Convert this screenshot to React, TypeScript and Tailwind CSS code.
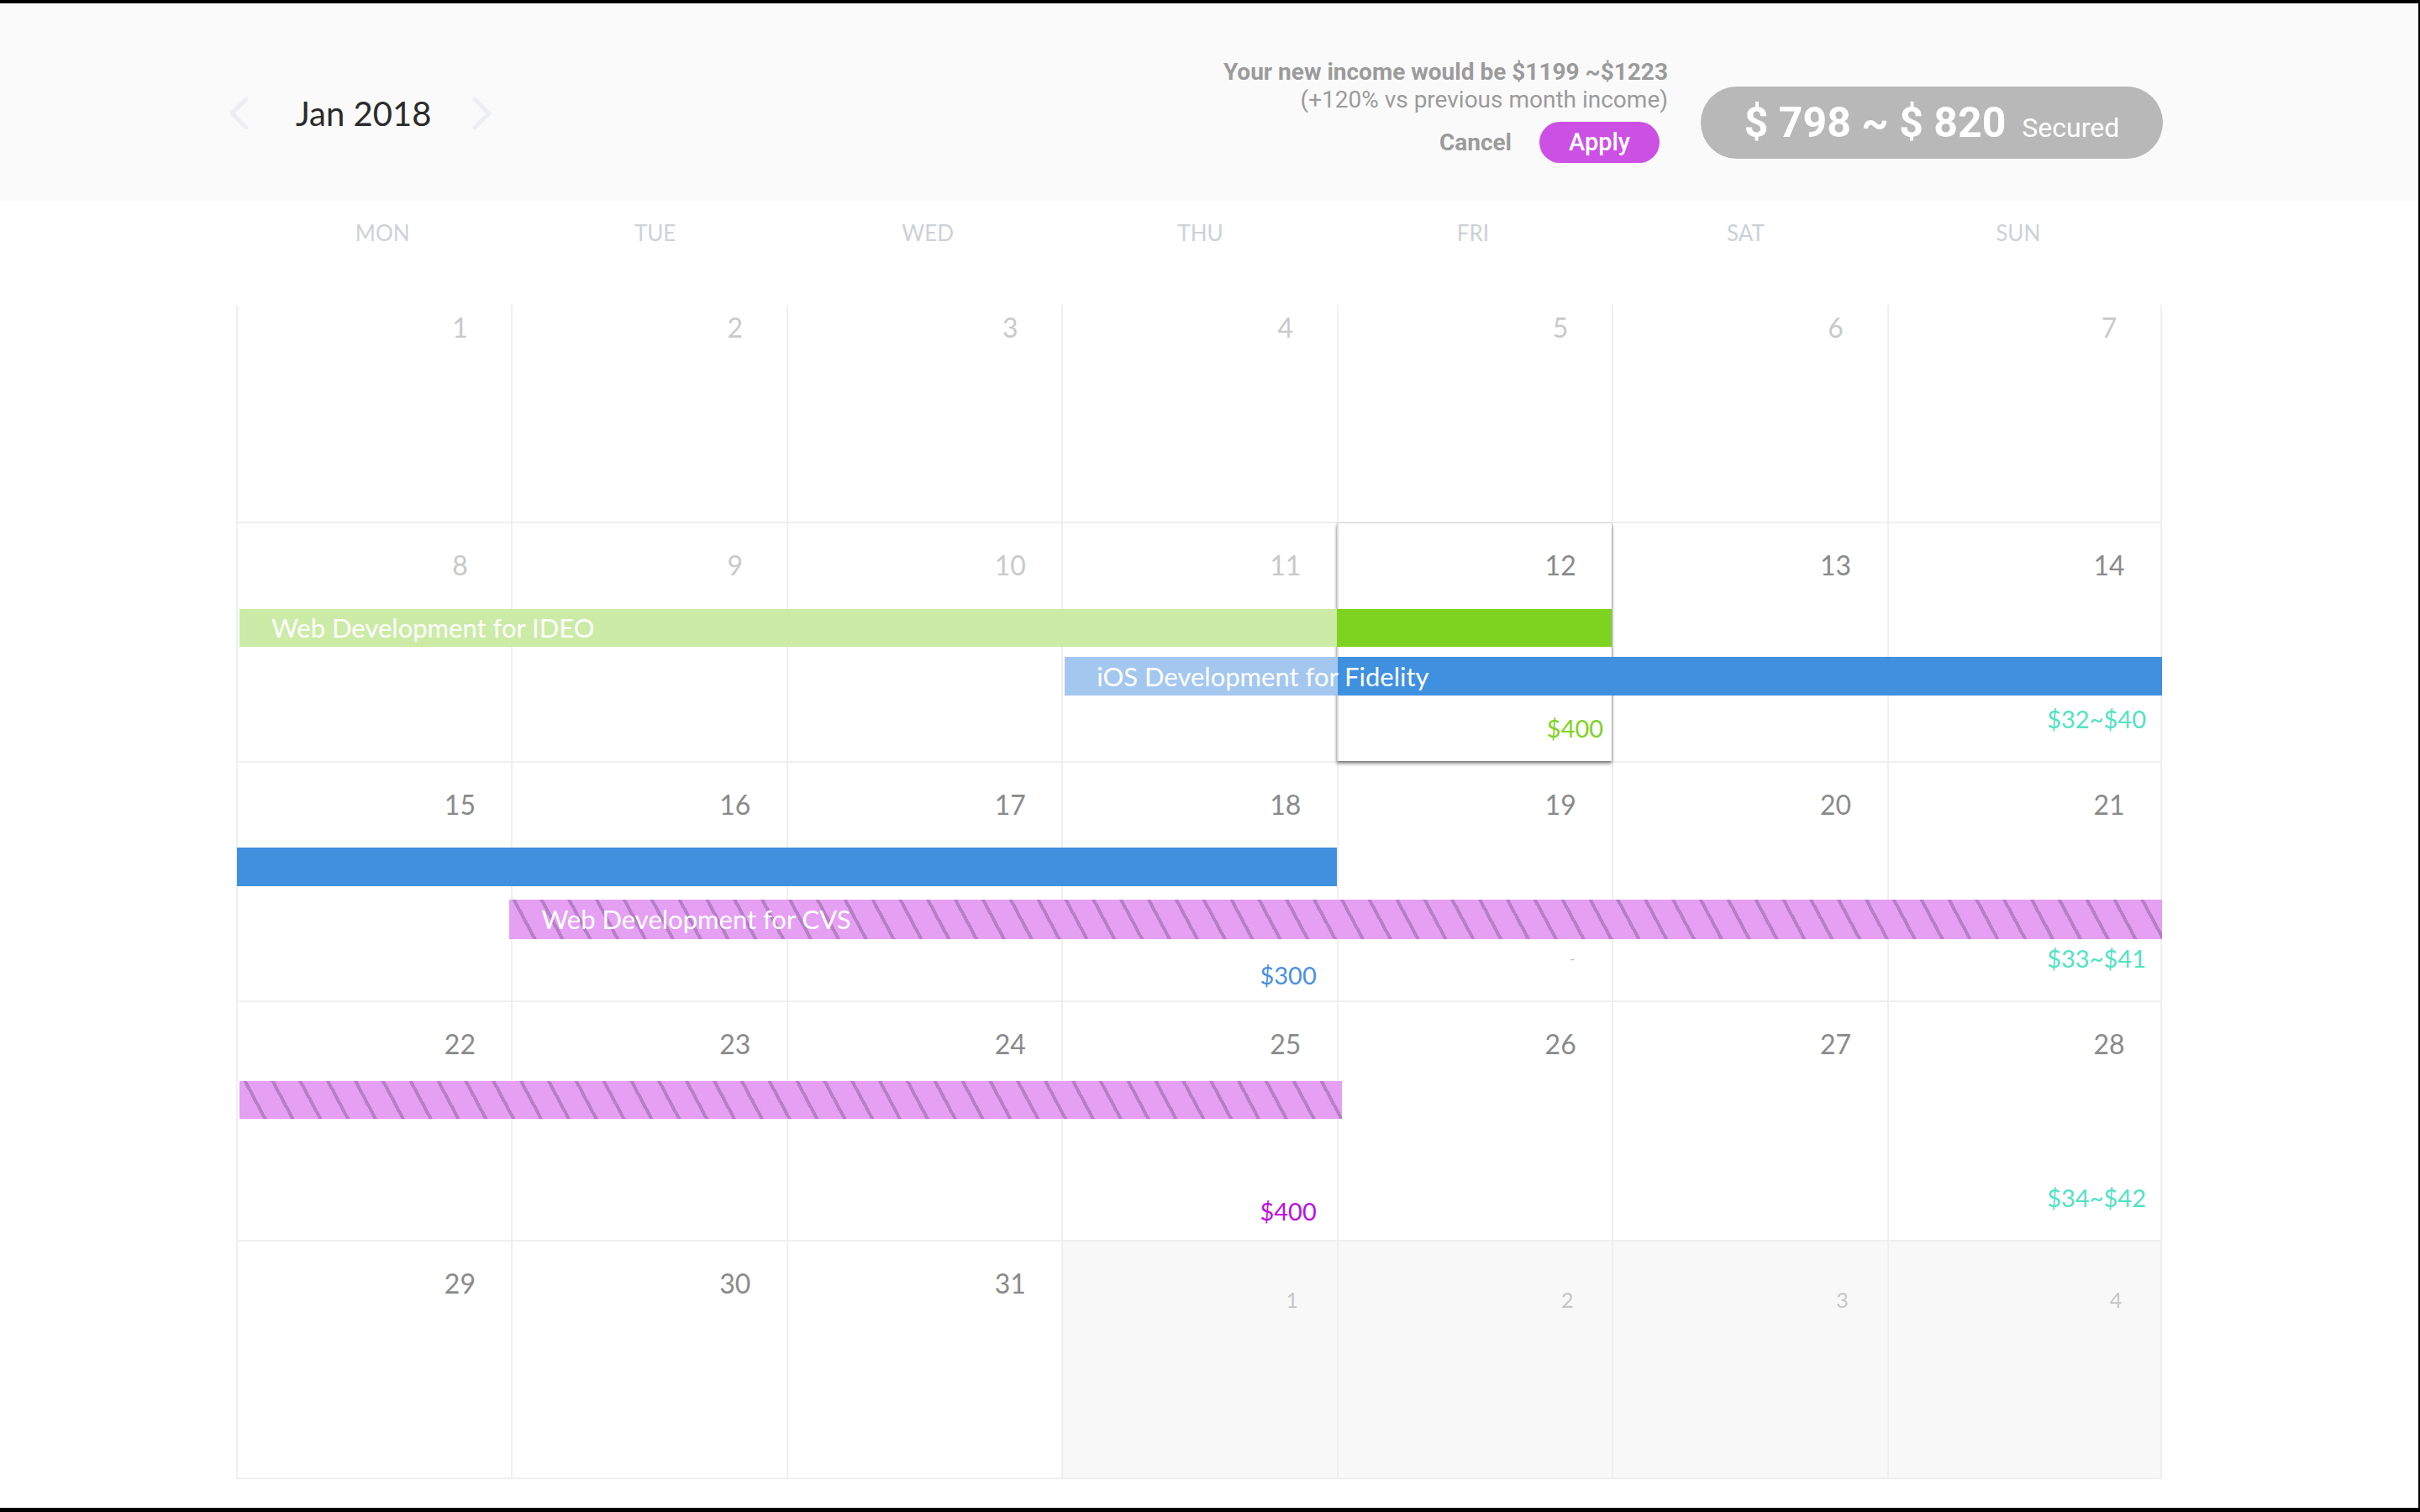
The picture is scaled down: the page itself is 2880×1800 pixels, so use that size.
import React from "react";

const days = ["MON", "TUE", "WED", "THU", "FRI", "SAT", "SUN"];

const colStart = [
  "col-start-1",
  "col-start-2",
  "col-start-3",
  "col-start-4",
  "col-start-5",
  "col-start-6",
  "col-start-7",
];

type Label = { text: string; className: string };

type Cell = {
  n: number;
  tone: "past" | "now" | "next";
  selected?: boolean;
  label?: Label;
};

type Bar = { className: string; text?: string };

type Week = { first?: boolean; cells: Cell[]; bars: Bar[] };

const stripes =
  "bg-[repeating-linear-gradient(62deg,#e59ff3_0px,#e59ff3_25px,#b67fc6_25px,#b67fc6_29px)]";

const weeks: Week[] = [
  {
    first: true,
    cells: [1, 2, 3, 4, 5, 6, 7].map((n) => ({ n, tone: "past" as const })),
    bars: [],
  },
  {
    cells: [
      { n: 8, tone: "past" },
      { n: 9, tone: "past" },
      { n: 10, tone: "past" },
      { n: 11, tone: "past" },
      {
        n: 12,
        tone: "now",
        selected: true,
        label: { text: "$400", className: "text-[29px] leading-[34px] text-[#7ed321] pb-[22px] pr-[10px]" },
      },
      { n: 13, tone: "now" },
      {
        n: 14,
        tone: "now",
        label: { text: "$32~$40", className: "text-[29px] leading-[34px] text-[#50e3c2] pb-[33px] pr-[17px]" },
      },
    ],
    bars: [
      {
        className:
          "col-start-1 col-end-6 mt-[102px] h-[45px] ml-[4px] bg-[linear-gradient(90deg,#cbeba6_0%,#cbeba6_80%,#7ed321_80%)]",
        text: "Web Development for IDEO",
      },
      {
        className:
          "col-start-4 col-end-8 mt-[159px] h-[46px] ml-[4px] bg-[linear-gradient(90deg,#a4c7f0_0%,#a4c7f0_24.9%,#4090e0_24.9%)]",
        text: "iOS Development for Fidelity",
      },
    ],
  },
  {
    cells: [
      { n: 15, tone: "now" },
      { n: 16, tone: "now" },
      { n: 17, tone: "now" },
      {
        n: 18,
        tone: "now",
        label: { text: "$300", className: "text-[29px] leading-[34px] text-[#4a90e2] pb-[13px] pr-[24px]" },
      },
      {
        n: 19,
        tone: "now",
        label: { text: "-", className: "text-[16px] leading-[16px] text-[#b5b5b5] pb-[42px] pr-[44px]" },
      },
      { n: 20, tone: "now" },
      {
        n: 21,
        tone: "now",
        label: { text: "$33~$41", className: "text-[29px] leading-[34px] text-[#50e3c2] pb-[33px] pr-[17px]" },
      },
    ],
    bars: [
      { className: "col-start-1 col-end-5 mt-[101px] h-[46px] ml-[1px] bg-[#4090e0]" },
      {
        className: `col-start-2 col-end-8 mt-[163px] h-[47px] ml-[-2px] ${stripes}`,
        text: "Web Development for CVS",
      },
    ],
  },
  {
    cells: [
      { n: 22, tone: "now" },
      { n: 23, tone: "now" },
      { n: 24, tone: "now" },
      {
        n: 25,
        tone: "now",
        label: { text: "$400", className: "text-[29px] leading-[34px] text-[#bd10e0] pb-[17px] pr-[24px]" },
      },
      { n: 26, tone: "now" },
      { n: 27, tone: "now" },
      {
        n: 28,
        tone: "now",
        label: { text: "$34~$42", className: "text-[29px] leading-[34px] text-[#50e3c2] pb-[33px] pr-[17px]" },
      },
    ],
    bars: [
      {
        className: `col-start-1 col-end-5 mt-[94px] h-[45px] ml-[4px] mr-[-6px] ${stripes}`,
      },
    ],
  },
  {
    cells: [
      { n: 29, tone: "now" },
      { n: 30, tone: "now" },
      { n: 31, tone: "now" },
      { n: 1, tone: "next" },
      { n: 2, tone: "next" },
      { n: 3, tone: "next" },
      { n: 4, tone: "next" },
    ],
    bars: [],
  },
];

function Chevron({ right }: { right?: boolean }) {
  return (
    <svg width="24" height="38" viewBox="0 0 24 38" fill="none">
      <polyline
        points={right ? "3,2 20,19 3,36" : "21,2 4,19 21,36"}
        stroke="#eceef2"
        strokeWidth="5"
        strokeLinecap="round"
        strokeLinejoin="round"
      />
    </svg>
  );
}

function DayCell({ cell, i, first, last }: { cell: Cell; i: number; first?: boolean; last?: boolean }) {
  const numClass =
    cell.tone === "next"
      ? "text-[25px] leading-[30px] text-[#c6c6c6] w-[50px] mr-[28px] pt-[54px]"
      : cell.tone === "past"
        ? `text-[32px] leading-[40px] text-[#c9c9c9] w-[70px] mr-[26px] ${first ? "pt-[7px]" : "pt-[30px]"}`
        : "text-[32px] leading-[40px] text-[#8a8a8a] w-[70px] mr-[26px] pt-[30px]";
  return (
    <div
      className={`${colStart[i]} row-start-1 flex flex-col items-end border-l-2 border-[#efefef] ${
        last ? "border-r-2" : ""
      } ${cell.tone === "next" ? "bg-[#f8f8f8]" : ""} ${
        cell.selected
          ? "relative z-10 bg-white border-l-[#dcdcdc] shadow-[0_3px_4px_rgba(0,0,0,0.45),0_0_2px_rgba(0,0,0,0.25)]"
          : ""
      }`}
    >
      <span className={`text-center ${numClass}`}>{cell.n}</span>
      {cell.label && <span className={`mt-auto ${cell.label.className}`}>{cell.label.text}</span>}
    </div>
  );
}

export default function App() {
  return (
    <div className="w-[2880px] h-[1800px] bg-black pt-[4px] pr-[2px] pb-[5px]">
      <div className="h-full bg-white flex flex-col">
        <header className="h-[235px] shrink-0 bg-[#fafafa] flex items-start">
          <div className="ml-[272px] mt-[102px] h-[58px] flex items-center">
            <Chevron />
            <span className="ml-[56px] text-[40px] leading-[58px] text-[#2b2b2b] font-['Lato',sans-serif]">
              Jan 2018
            </span>
            <span className="ml-[49px]">
              <Chevron right />
            </span>
          </div>
          <div className="ml-auto mr-[304px] flex items-start font-['Roboto',sans-serif]">
            <div className="mt-[65px] flex flex-col items-end text-[#9b9b9b]">
              <p className="text-[28px] leading-[33px] font-bold">Your new income would be $1199 ~$1223</p>
              <p className="text-[28px] leading-[33px]">(+120% vs previous month income)</p>
              <div className="mt-[10px] mr-[10px] flex items-center gap-[33px]">
                <span className="text-[28px] font-bold">Cancel</span>
                <button className="w-[143px] h-[49px] rounded-full bg-[#cc50e4] text-white text-[29px] font-medium">
                  Apply
                </button>
              </div>
            </div>
            <div className="ml-[39px] mt-[99px] w-[550px] h-[86px] rounded-full bg-[#b8b8b8] flex items-center justify-center text-white">
              <div className="flex items-baseline">
                <span className="text-[50px] font-bold">$ 798 ~ $ 820</span>
                <span className="ml-[19px] text-[32px]">Secured</span>
              </div>
            </div>
          </div>
        </header>

        <div className="ml-[281px] w-[2292px] font-['Lato',sans-serif]">
          <div className="ml-[12px] w-[2271px] grid grid-cols-7 h-[124px] pt-[22px]">
            {days.map((d) => (
              <div key={d} className="text-center text-[26px] leading-[32px] text-[#ccd1d8]">
                {d}
              </div>
            ))}
          </div>

          {weeks.map((w, wi) => (
            <div
              key={wi}
              className={`grid grid-cols-7 grid-rows-[1fr] ${
                w.first ? "h-[258px]" : "h-[285px] border-t-2 border-[#efefef]"
              } ${wi === weeks.length - 1 ? "border-b-2" : ""}`}
            >
              {w.cells.map((c, i) => (
                <DayCell key={i} cell={c} i={i} first={w.first} last={i === 6} />
              ))}
              {w.bars.map((b, bi) => (
                <div
                  key={bi}
                  className={`row-start-1 self-start relative z-20 flex items-center whitespace-nowrap ${b.className}`}
                >
                  {b.text && (
                    <span className="pl-[38px] text-[31px] leading-none text-white">{b.text}</span>
                  )}
                </div>
              ))}
            </div>
          ))}
        </div>
      </div>
    </div>
  );
}
